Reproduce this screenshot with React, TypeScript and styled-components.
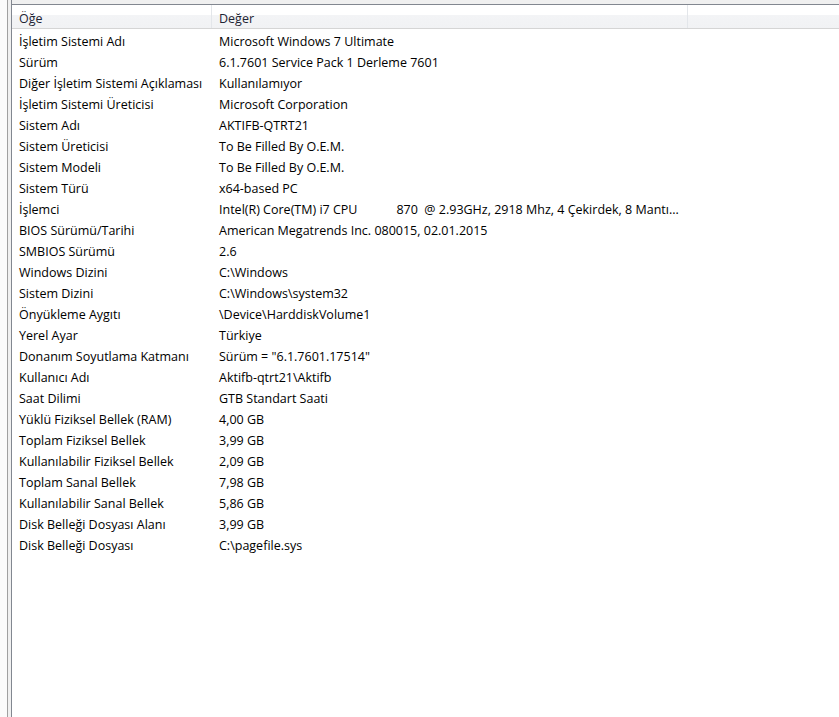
import React from "react";
import styled, { createGlobalStyle } from "styled-components";

const GlobalStyle = createGlobalStyle`
  html, body {
    margin: 0;
    padding: 0;
    background: #ffffff;
  }
  body {
    font-family: "Open Sans", "Noto Sans", "Liberation Sans", sans-serif;
    font-size: 12.5px;
    color: #000;
  }
`;

const Shell = styled.div`
  display: flex;
  height: 717px;
  width: 839px;
  overflow: hidden;
  background: #f0f0f0;
`;

const TreePane = styled.div`
  width: 7px;
  background: #fbfbfb;
  flex-shrink: 0;
`;

const Splitter = styled.div`
  width: 3px;
  flex-shrink: 0;
  background: #f0f0f0;
  border-left: 1px solid #a0a0a0;
  border-right: 1px solid #828790;
`;

const ListView = styled.div`
  flex: 1;
  margin-top: 4px;
  border-top: 1px solid #828790;
  background: #fff;
  display: flex;
  flex-direction: column;
  min-width: 0;
`;

const Header = styled.div`
  display: grid;
  grid-template-columns: 200px 476px 1fr;
  height: 23px;
  border-bottom: 1px solid #d5d5d5;
  background: linear-gradient(#ffffff 0, #ffffff 10px, #f3f4f6 10px, #f1f2f4 100%);
  flex-shrink: 0;
`;

const HeaderCell = styled.div<{ $last?: boolean }>`
  display: flex;
  align-items: center;
  padding: 3px 0 0 7px;
  color: #1e2434;
  border-right: ${(p) => (p.$last ? "none" : "1px solid #e3e6ea")};
  white-space: nowrap;
  overflow: hidden;
`;

const Rows = styled.div`
  padding-top: 2px;
  display: flex;
  flex-direction: column;
`;

const Row = styled.div`
  display: grid;
  grid-template-columns: 200px 476px;
  height: 21px;
  line-height: 21px;
`;

const Cell = styled.div`
  padding-left: 7px;
  padding-right: 6px;
  white-space: pre;
  overflow: hidden;
  text-overflow: ellipsis;
`;

const items: [string, string][] = [
  ["İşletim Sistemi Adı", "Microsoft Windows 7 Ultimate"],
  ["Sürüm", "6.1.7601 Service Pack 1 Derleme 7601"],
  ["Diğer İşletim Sistemi Açıklaması", "Kullanılamıyor"],
  ["İşletim Sistemi Üreticisi", "Microsoft Corporation"],
  ["Sistem Adı", "AKTIFB-QTRT21"],
  ["Sistem Üreticisi", "To Be Filled By O.E.M."],
  ["Sistem Modeli", "To Be Filled By O.E.M."],
  ["Sistem Türü", "x64-based PC"],
  ["İşlemci", "Intel(R) Core(TM) i7 CPU            870  @ 2.93GHz, 2918 Mhz, 4 Çekirdek, 8 Mantı..."],
  ["BIOS Sürümü/Tarihi", "American Megatrends Inc. 080015, 02.01.2015"],
  ["SMBIOS Sürümü", "2.6"],
  ["Windows Dizini", "C:\\Windows"],
  ["Sistem Dizini", "C:\\Windows\\system32"],
  ["Önyükleme Aygıtı", "\\Device\\HarddiskVolume1"],
  ["Yerel Ayar", "Türkiye"],
  ["Donanım Soyutlama Katmanı", "Sürüm = \"6.1.7601.17514\""],
  ["Kullanıcı Adı", "Aktifb-qtrt21\\Aktifb"],
  ["Saat Dilimi", "GTB Standart Saati"],
  ["Yüklü Fiziksel Bellek (RAM)", "4,00 GB"],
  ["Toplam Fiziksel Bellek", "3,99 GB"],
  ["Kullanılabilir Fiziksel Bellek", "2,09 GB"],
  ["Toplam Sanal Bellek", "7,98 GB"],
  ["Kullanılabilir Sanal Bellek", "5,86 GB"],
  ["Disk Belleği Dosyası Alanı", "3,99 GB"],
  ["Disk Belleği Dosyası", "C:\\pagefile.sys"],
];

const App: React.FC = () => {
  return (
    <>
      <GlobalStyle />
      <Shell>
        <TreePane />
        <Splitter />
        <ListView>
          <Header>
            <HeaderCell>Öğe</HeaderCell>
            <HeaderCell>Değer</HeaderCell>
            <HeaderCell $last />
          </Header>
          <Rows>
            {items.map(([name, value]) => (
              <Row key={name}>
                <Cell>{name}</Cell>
                <Cell>{value}</Cell>
              </Row>
            ))}
          </Rows>
        </ListView>
      </Shell>
    </>
  );
};

export default App;
